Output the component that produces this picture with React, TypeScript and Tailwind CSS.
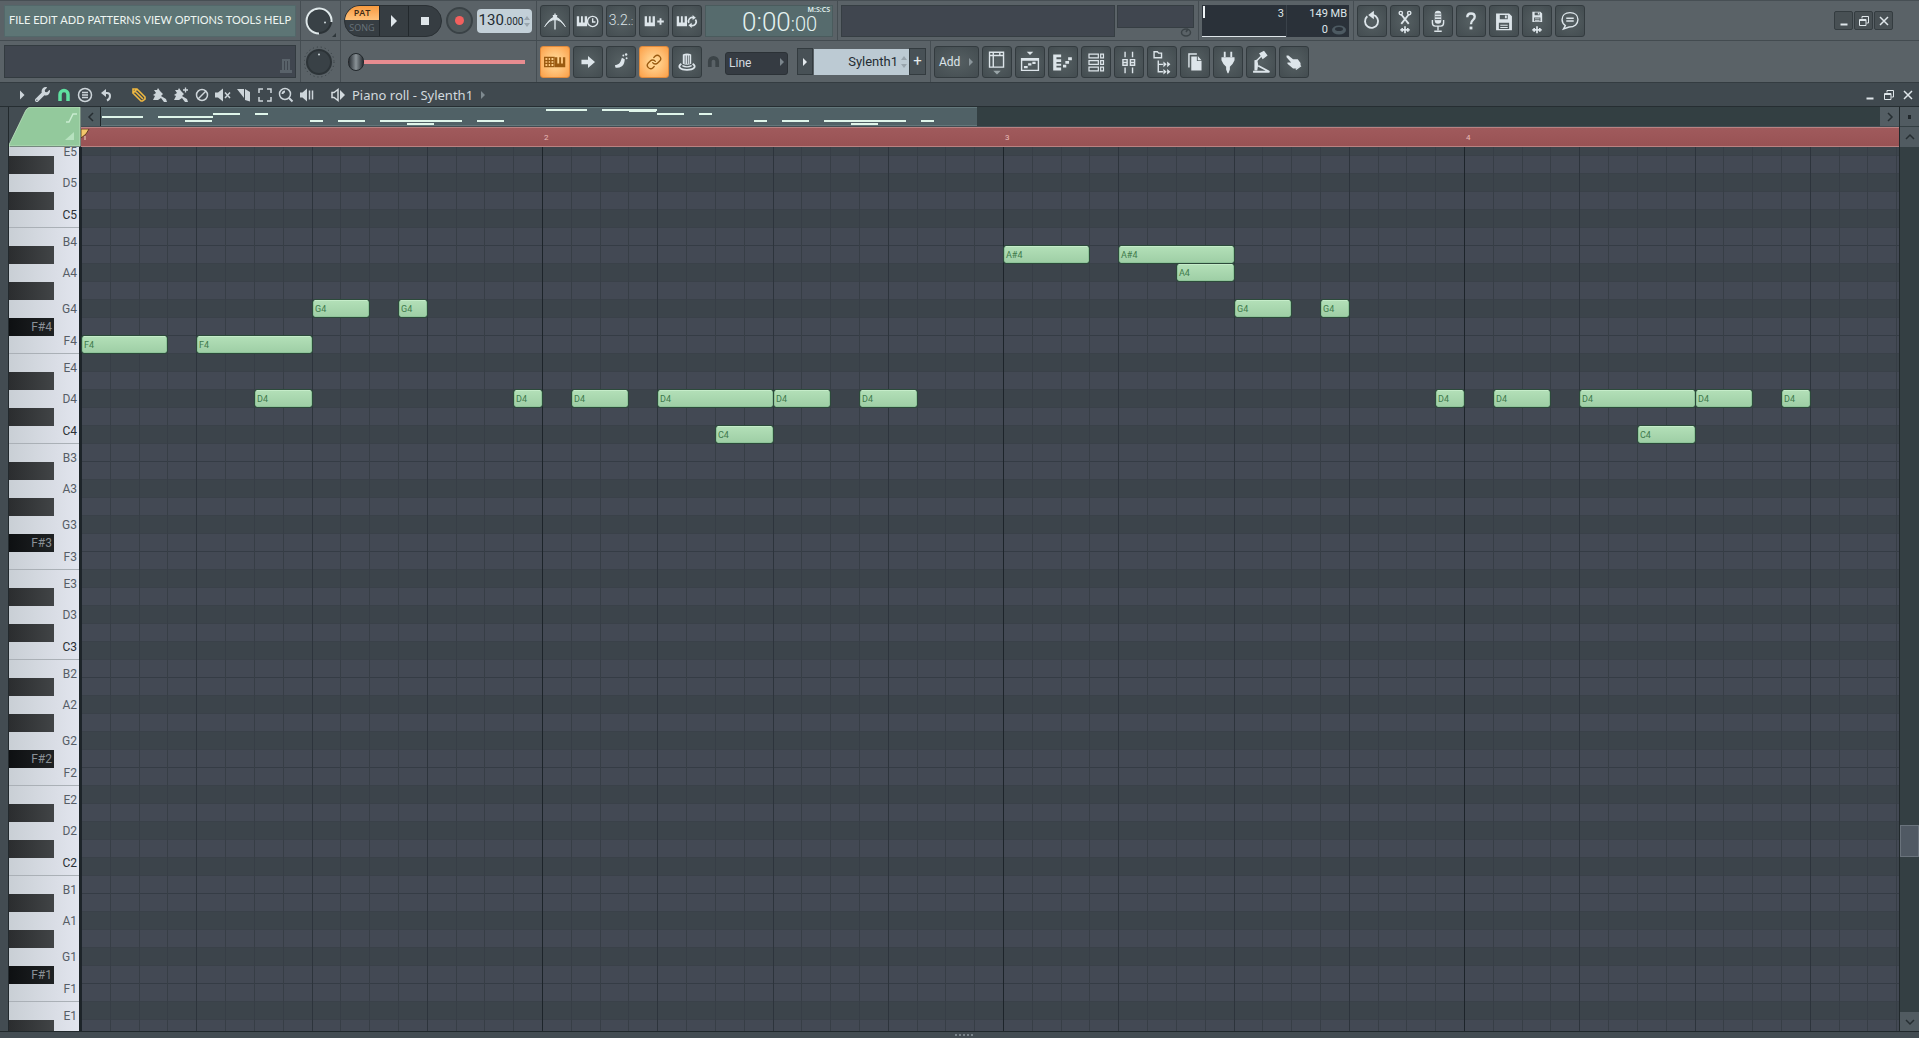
import type { ReactNode } from "react";
import { clsx } from "clsx";
import { Link } from "lucide-react";
import { FaWrench } from "react-icons/fa";

const ROW_HEIGHT = 18;
const BAR_WIDTH = 461;
const OVERVIEW_BAR_WIDTH = 222;

const MENU = ["FILE", "EDIT", "ADD", "PATTERNS", "VIEW", "OPTIONS", "TOOLS", "HELP"];

const NAMES = ["C", "C#", "D", "D#", "E", "F", "F#", "G", "G#", "A", "A#", "B"];
const TOP_PITCH = 76; // E5
const BOTTOM_PITCH = 27; // D#1

// white keys share the octave unevenly, so the tall ones are D, G and A
const TALL_KEYS = ["D", "G", "A"];
const DARK_ROWS = ["C", "D", "E", "G", "A"];

const PITCHES = Array.from(
  { length: TOP_PITCH - BOTTOM_PITCH + 1 },
  (_, i) => TOP_PITCH - i,
);

const nameOf = (pitch: number) => NAMES[pitch % 12];
const octaveOf = (pitch: number) => Math.floor(pitch / 12) - 1;
const labelOf = (pitch: number) => `${nameOf(pitch)}${octaveOf(pitch)}`;
const stepX = (step: number) => Math.round((step * BAR_WIDTH) / 16);
const overviewX = (step: number) => Math.round((step * OVERVIEW_BAR_WIDTH) / 16);

// [pitch, start, length], in sixteenths
const NOTES: [number, number, number][] = [
  [65, 0, 3],
  [65, 4, 4],
  [62, 6, 2],
  [67, 8, 2],
  [67, 11, 1],
  [62, 15, 1],
  [62, 17, 2],
  [62, 20, 4],
  [60, 22, 2],
  [62, 24, 2],
  [62, 27, 2],
  [70, 32, 3],
  [70, 36, 4],
  [69, 38, 2],
  [67, 40, 2],
  [67, 43, 1],
  [62, 47, 1],
  [62, 49, 2],
  [62, 52, 4],
  [60, 54, 2],
  [62, 56, 2],
  [62, 59, 1],
];

function Divider() {
  return <div className="ml-1 mr-[3px] w-px self-stretch bg-[#454d52]" />;
}

function Glyph({ children }: { children: ReactNode }) {
  return (
    <svg
      viewBox="0 0 30 32"
      className="h-8 w-[30px]"
      fill="none"
      stroke="currentColor"
      strokeWidth="1.5"
    >
      {children}
    </svg>
  );
}

function ToolButton({
  label,
  active,
  children,
}: {
  label: string;
  active?: boolean;
  children: ReactNode;
}) {
  return (
    <button
      type="button"
      aria-label={label}
      className={clsx(
        "flex h-8 w-[30px] shrink-0 items-center justify-center rounded-[3px] border",
        active
          ? "border-[#e08a3c] bg-radial from-[#ffe0a0] to-[#fb9f45] text-[#9a5a10]"
          : "border-[#333b3f] bg-radial from-[#566063] to-[#434c50] text-[#dde5ea]",
      )}
    >
      {children}
    </button>
  );
}

function Piano({ x }: { x: number }) {
  return (
    <path
      transform={`translate(${x} 11)`}
      d="M0 0H2.5V6.5H4.5V0H6.5V6.5H8.5V0H11V10.5H0Z"
      fill="currentColor"
      stroke="none"
    />
  );
}

function Wave() {
  return (
    <path d="M10 25.5H20M12 23.5V27.5M15 21.5V29M18 23.5V27.5" strokeWidth="1.8" />
  );
}

function Floppy() {
  return (
    <path
      d="M0 0H14L17 3V18H0ZM4 1.500V6H12.500V1.500ZM3 10V16.500H14V10ZM9.500 2H11.500V5H9.500Z M4.500 12H12.500V13H4.500ZM4.500 14.500H12.500V15.500H4.500Z"
      fill="currentColor"
      fillRule="evenodd"
      stroke="none"
    />
  );
}

function Knob({ lit }: { lit?: boolean }) {
  return (
    <svg viewBox="0 0 32 34" className="h-[34px] w-8 shrink-0" fill="none">
      {!lit && (
        <circle cx="15" cy="17" r="15" stroke="#353d41" strokeDasharray="1 3" />
      )}
      <circle cx="15" cy="17" r="12" fill="#394146" stroke="#2c3337" strokeWidth="2" />
      {lit ? (
        <>
          <path
            d="M15 29.500A12.500 12.500 0 1 1 27.500 18"
            stroke="#dfe8ea"
            strokeWidth="2"
          />
          <circle cx="21" cy="18.500" r="1" fill="#cfd8dc" />
          <path d="M28 33H32V29Z" fill="#2f373b" />
        </>
      ) : (
        <circle cx="15" cy="9.500" r="1" fill="#cfd8dc" />
      )}
    </svg>
  );
}

function WindowGlyph({ kind }: { kind: "min" | "restore" | "close" }) {
  return (
    <svg viewBox="0 0 10 10" className="size-[10px]" fill="none" stroke="#dfe6ea">
      {kind === "min" && <path d="M1.500 8.500H8.500" strokeWidth="2" />}
      {kind === "restore" && (
        <path d="M3 2.500V.5H9.500V7H7.500M.5 3.500H7V9.500H.5ZM.5 4.500H7" />
      )}
      {kind === "close" && <path d="M1 1L9 9M9 1L1 9" strokeWidth="1.5" />}
    </svg>
  );
}

function Transport() {
  return (
    <div className="flex h-8 w-[98px] shrink-0 overflow-hidden rounded-2xl border border-[#2a3034] bg-[#363d42]">
      <button
        type="button"
        className="flex w-[34px] flex-col items-stretch text-center font-['Open_Sans'] text-[9px] font-semibold leading-[14px]"
      >
        <span className="bg-linear-to-b from-[#f79a3e] to-[#ffc27a] text-[#3b2a16]">
          PAT
        </span>
        <span className="font-normal leading-4 text-[#69737a]">SONG</span>
      </button>
      <button
        type="button"
        aria-label="Play"
        className="flex w-[30px] items-center justify-center border-x border-[#22282c]"
      >
        <svg viewBox="0 0 8 12" className="h-3 w-2 fill-[#dfe6ea]">
          <path d="M1 0L7 6L1 12Z" />
        </svg>
      </button>
      <button type="button" aria-label="Stop" className="flex flex-1 items-center justify-center">
        <span className="size-2 bg-[#dfe6ea]" />
      </button>
    </div>
  );
}

function MainBar() {
  return (
    <div className="flex h-[41px] items-center border-b border-[#434b50] border-t border-t-[#474f54] pl-1">
      <nav className="flex h-8 w-[292px] shrink-0 items-center justify-between border border-[#53686a] bg-[#5d7575] px-1 font-['Lato'] text-[11px] text-[#eef5f2]">
        {MENU.map((item) => (
          <a key={item} href="#">
            {item}
          </a>
        ))}
      </nav>
      <Divider />
      <Knob lit />
      <Divider />
      <Transport />
      <button
        type="button"
        aria-label="Record"
        className="ml-1 flex size-[27px] shrink-0 items-center justify-center rounded-full border-2 border-[#3a4246] bg-[#4f585b]"
      >
        <span className="size-[9px] rounded-full bg-[#f2605e]" />
      </button>
      <button
        type="button"
        aria-label="Tempo"
        className="ml-1 flex h-6 w-[55px] shrink-0 items-center justify-center gap-px rounded-[4px] bg-[#c3d0d8] text-[15px] leading-6 text-[#222b31]"
      >
        <span>
          130<span className="text-[10px]">.000</span>
        </span>
        <svg viewBox="0 0 6 12" className="h-3 w-[6px] fill-[#9aa6ae]">
          <path d="M0 5L3 1L6 5ZM0 8H6L3 12Z" />
        </svg>
      </button>
      <Divider />
      <div className="flex shrink-0 gap-[3px]">
        <ToolButton label="Metronome">
          <Glyph>
            <path d="M4 22Q9 14.500 15 14.500Q21 14.500 26 22Q20 12 15 12Q10 12 4 22Z" fill="currentColor" strokeWidth="1" />
            <path d="M15 8V25" />
            <path d="M12.500 9.500H17.500L16.500 14H13.500Z" fill="currentColor" stroke="none" />
          </Glyph>
        </ToolButton>
        <ToolButton label="Wait for input">
          <Glyph>
            <Piano x={3} />
            <circle cx="20" cy="16.500" r="5.500" fill="#4a5357" />
            <path d="M20 13V17H23" />
          </Glyph>
        </ToolButton>
        <ToolButton label="Countdown before recording">
          <span className="text-[14px] font-light">
            3.2.<span className="text-[10px]">:</span>
          </span>
        </ToolButton>
        <ToolButton label="Blend recording">
          <Glyph>
            <Piano x={5} />
            <path d="M18.500 16.500H25.500M22 13V20" strokeWidth="2" />
          </Glyph>
        </ToolButton>
        <ToolButton label="Loop recording">
          <Glyph>
            <Piano x={4} />
            <path d="M17 18A4 4 0 0 1 22 12.500M24 14.500A4 4 0 0 1 19 20.500" strokeWidth="1.8" />
            <path d="M21 9.500L24.500 12.500L21 15ZM20 18L16.500 20.500L20 23.500Z" fill="currentColor" stroke="none" />
          </Glyph>
        </ToolButton>
      </div>
      <div className="relative ml-[3px] flex h-8 w-32 shrink-0 items-baseline border border-[#4a5b5d] bg-[#566b6d] pl-9 text-[#e4f2f0]">
        <span className="text-[26px] font-light leading-8">0:00</span>
        <span className="text-[20px] font-light leading-5">:00</span>
        <span className="absolute right-[2px] top-0 font-['Noto_Sans'] text-[7px] font-semibold leading-2">
          M:S:CS
        </span>
      </div>
      <Divider />
      <div className="h-8 w-[274px] shrink-0 border border-[#363e43] bg-[#40464f]" />
      <div className="ml-[2px] flex h-8 w-[77px] shrink-0 flex-col items-end">
        <div className="h-[23px] w-full shrink-0 border border-[#363e43] bg-[#40464f]" />
        <svg viewBox="0 0 12 9" className="mr-[2px] h-[9px] w-3" fill="none" stroke="#3b4347" strokeWidth="1.5">
          <ellipse cx="6" cy="4.500" rx="4.500" ry="3.500" />
          <path d="M6 4L8 1" />
        </svg>
      </div>
      <Divider />
      <div className="flex h-8 w-[147px] shrink-0 bg-[#2a3139] text-[11px] leading-4 text-[#dfe6ea]">
        <div className="flex w-[84px] justify-between border-b border-[#dfe6ea] pr-[2px] pt-px">
          <span className="ml-px h-3 w-[2px] bg-[#eef3f5]" />
          <span>3</span>
        </div>
        <div className="flex flex-1 flex-col items-end border-l border-[#3a424a] pr-[2px] pt-px">
          <span>149 MB</span>
          <span className="flex items-center gap-[3px]">
            0
            <svg viewBox="0 0 16 10" className="h-[10px] w-4">
              <ellipse cx="8" cy="5" rx="7" ry="4.500" fill="#4d5a62" />
              <ellipse cx="8" cy="4" rx="4" ry="2" fill="#2a3139" />
            </svg>
          </span>
        </div>
      </div>
      <Divider />
      <div className="flex shrink-0 gap-[3px]">
        <ToolButton label="Undo">
          <Glyph>
            <path d="M10 11A7 7 0 1 0 16 9.500" strokeWidth="2" />
            <path d="M17 5V14L11 9.500Z" fill="currentColor" stroke="none" />
          </Glyph>
        </ToolButton>
        <ToolButton label="Cut selection">
          <Glyph>
            <path d="M11 9L19 19M19 9L11 19" strokeWidth="2" />
            <circle cx="10.500" cy="7.500" r="1.800" />
            <circle cx="19.500" cy="7.500" r="1.800" />
            <Wave />
          </Glyph>
        </ToolButton>
        <ToolButton label="Record audio">
          <Glyph>
            <rect x="11.500" y="5" width="7" height="14" rx="3.500" fill="currentColor" stroke="none" />
            <path d="M12 8.500H18M12 11.500H18M12 14.500H18" stroke="#4a5357" strokeWidth="1" />
            <path d="M9 15V18Q9 21.500 12 21.500H18Q21 21.500 21 18V15M15 22V26M11 27H19" />
          </Glyph>
        </ToolButton>
        <ToolButton label="Help">
          <Glyph>
            <path d="M11 12Q11 8 15 8Q19 8 19 11.500Q19 13.500 17 15Q15 16.500 15 19.500" strokeWidth="2.500" />
            <rect x="13.500" y="22" width="3" height="3" fill="currentColor" stroke="none" />
          </Glyph>
        </ToolButton>
        <ToolButton label="Save">
          <Glyph>
            <g transform="translate(6.500 8)">
              <Floppy />
            </g>
          </Glyph>
        </ToolButton>
        <ToolButton label="Render">
          <Glyph>
            <g transform="translate(10 6) scale(.62)">
              <Floppy />
            </g>
            <Wave />
          </Glyph>
        </ToolButton>
        <ToolButton label="Messages">
          <Glyph>
            <path d="M15 7C10 7 6.500 10 6.500 14.500C6.500 17.500 8 19.500 10 21L8 24.500L14 22.500C20 22.500 23.500 19 23.500 14.500C23.500 10 20 7 15 7Z" />
            <path d="M11 13H19M11 16H19" />
          </Glyph>
        </ToolButton>
      </div>
      <div className="ml-auto mr-[26px] flex gap-px">
        {(["min", "restore", "close"] as const).map((kind) => (
          <button
            key={kind}
            type="button"
            aria-label={kind}
            className="flex size-[19px] items-center justify-center rounded-[2px] border border-[#343c40] bg-[#485054]"
          >
            <WindowGlyph kind={kind} />
          </button>
        ))}
      </div>
    </div>
  );
}

function ShortcutBar() {
  return (
    <div className="flex h-[42px] items-center border-b border-[#343c41] pl-1">
      <div className="flex h-[33px] w-[292px] shrink-0 items-end justify-end border border-[#333b40] bg-[#40464f] p-[3px]">
        <svg viewBox="0 0 12 16" className="h-4 w-3">
          <path d="M2 1H10V12H12V15H0V12H2Z" fill="#59626a" />
          <path d="M4.500 3V12M7.500 3V12" stroke="#40464f" />
        </svg>
      </div>
      <Divider />
      <Knob />
      <Divider />
      <div className="flex h-[33px] w-[188px] shrink-0 items-center">
        <input
          type="range"
          aria-label="Master pitch"
          min={0}
          max={100}
          defaultValue={0}
          className="ml-1 h-[4px] w-[177px] appearance-none bg-[#e78c90] [&::-webkit-slider-thumb]:h-[18px] [&::-webkit-slider-thumb]:w-4 [&::-webkit-slider-thumb]:appearance-none [&::-webkit-slider-thumb]:rounded-full [&::-webkit-slider-thumb]:border [&::-webkit-slider-thumb]:border-[#22282c] [&::-webkit-slider-thumb]:bg-linear-to-r [&::-webkit-slider-thumb]:from-[#2b3136] [&::-webkit-slider-thumb]:via-[#8b9398] [&::-webkit-slider-thumb]:to-[#2b3136]"
        />
      </div>
      <Divider />
      <div className="flex shrink-0 gap-[3px]">
        <ToolButton label="Typing keyboard" active>
          <Glyph>
            <path d="M4 11H14V21H4ZM4 14.500H14M4 17.500H14M7.500 11V21M10.500 11V21" />
            <Piano x={15} />
          </Glyph>
        </ToolButton>
        <ToolButton label="Step editing">
          <Glyph>
            <path d="M8 13.500H15V9.500L22.500 16L15 22.500V18.500H8Z" fill="currentColor" stroke="none" />
          </Glyph>
        </ToolButton>
        <ToolButton label="Slide">
          <Glyph>
            <path d="M8.500 19.500Q13 19 14.500 15.500L16 11.500L19 13Q19 18 16 20.500Q12 23 9 22Z" fill="currentColor" stroke="none" />
            <circle cx="17.500" cy="9" r="1" fill="currentColor" stroke="none" />
            <circle cx="20.500" cy="8" r="1.300" fill="currentColor" stroke="none" />
            <circle cx="21" cy="12" r="1" fill="currentColor" stroke="none" />
          </Glyph>
        </ToolButton>
        <ToolButton label="Multilink" active>
          <Link size={16} strokeWidth={2} />
        </ToolButton>
        <ToolButton label="Plugin picker">
          <Glyph>
            <path d="M10.500 8Q15 6 19.500 8V18Q15 20 10.500 18Z" fill="currentColor" stroke="none" />
            <path d="M13 9V18M15.500 9V18M17.500 9V18" stroke="#4a5357" strokeWidth=".8" />
            <path d="M9 18C4 21 8 24.500 15 24.500C22 24.500 26 21 21 18" strokeWidth="2" />
            <path d="M10 20Q15 22.500 20 20" />
          </Glyph>
        </ToolButton>
      </div>
      <svg viewBox="0 0 14 14" className="mx-[5px] size-[13px] shrink-0" fill="none" stroke="#3c4448" strokeWidth="4">
        <path d="M3 13V7A4 4 0 0 1 11 7V13" />
      </svg>
      <div className="relative h-[23px] w-[63px] shrink-0">
        <select
          aria-label="Snap"
          className="h-full w-full appearance-none rounded-[3px] border border-[#2b3136] bg-[#353b42] pl-[3px] text-xs text-[#d5dce0]"
        >
          <option>Line</option>
        </select>
        <svg viewBox="0 0 4 8" className="absolute right-1 top-2 h-2 w-1 fill-[#7b858c]">
          <path d="M0 0L4 4L0 8Z" />
        </svg>
      </div>
      <button
        type="button"
        aria-label="Pattern menu"
        className="ml-[9px] flex h-[27px] w-4 shrink-0 items-center justify-center border border-[#333b3f] bg-[#485156]"
      >
        <svg viewBox="0 0 4 8" className="h-2 w-1 fill-[#e5ebee]">
          <path d="M0 0L4 4L0 8Z" />
        </svg>
      </button>
      <button
        type="button"
        className="ml-px flex h-[26px] w-[95px] shrink-0 items-center justify-end gap-[3px] bg-[#bccad3] pr-[2px] text-[13px] text-[#232c32]"
      >
        Sylenth1
        <svg viewBox="0 0 6 12" className="h-3 w-[6px] fill-[#98a4ac]">
          <path d="M0 4L3 0L6 4ZM0 8H6L3 12Z" />
        </svg>
      </button>
      <button
        type="button"
        className="flex h-[27px] w-[17px] shrink-0 items-center justify-center border border-[#333b3f] bg-[#485156] text-[15px] text-[#e5ebee]"
      >
        +
      </button>
      <Divider />
      <button
        type="button"
        className="mr-[3px] flex h-8 w-[45px] shrink-0 items-center justify-between rounded-[3px] border border-[#333b3f] bg-radial from-[#566063] to-[#434c50] pl-1 pr-[5px] text-xs text-[#dde5ea]"
      >
        Add
        <svg viewBox="0 0 4 8" className="h-2 w-1 fill-[#8b969b]">
          <path d="M0 0L4 4L0 8Z" />
        </svg>
      </button>
      <div className="flex shrink-0 gap-[3px]">
        <ToolButton label="Playlist">
          <Glyph>
            <path d="M7 5.500H22V21.500H7ZM7 9H22M11 5.500V21.500M18 5.500V9" />
            <path d="M11 25.500H19L15 29.500Z" fill="#9aa5a8" stroke="none" />
          </Glyph>
        </ToolButton>
        <ToolButton label="Open playlist">
          <Glyph>
            <path d="M11.500 5H18.500L15 8.500Z" fill="currentColor" stroke="none" />
            <path d="M6 12.500H24V25H6Z" />
            <path d="M6 13.500H24M8.500 21.500H12.500M13 18.500H16.500M17.500 17H21" strokeWidth="2.500" />
          </Glyph>
        </ToolButton>
        <ToolButton label="Piano roll">
          <Glyph>
            <path d="M4.500 8H13V11H8V13H13V16H8V18H13V20H8V22H13V25H4.500Z" fill="currentColor" stroke="none" />
            <path d="M15 20.500H18.500M17.500 16.500H21.500M20.500 12.500H24.500" strokeWidth="3" />
          </Glyph>
        </ToolButton>
        <ToolButton label="Channel rack">
          <Glyph>
            <path d="M7.500 7.500H17.500V11.500H7.500ZM20 7.500H23V11.500H20ZM7.500 14.500H17.500V18.500H7.500ZM20 14.500H23V18.500H20ZM7.500 21.500H17.500V25.500H7.500ZM20 21.500H23V25.500H20Z" strokeWidth="1.3" />
          </Glyph>
        </ToolButton>
        <ToolButton label="Mixer">
          <Glyph>
            <path d="M8.500 13.500H13V19.500H8.500ZM16.500 13.500H21V19.500H16.500ZM10.800 5V11M18.800 5V11M10.800 22V28M18.800 22V28" />
            <path d="M8.500 16.500H13M16.500 16.500H21" />
          </Glyph>
        </ToolButton>
        <ToolButton label="Browser">
          <Glyph>
            <path d="M6.500 5H10L11.500 6.500H14.500V11.500H6.500Z" />
            <path d="M11 14.500V26.500H16M11 18.500H16" />
            <path d="M16.500 15.500L20 18.500L16.500 21.500ZM16.500 23.500L20 26.500L16.500 29.500ZM20.500 15.500L24 18.500L20.500 21.500ZM20.500 23.500L24 26.500L20.500 29.500Z" fill="currentColor" stroke="none" />
          </Glyph>
        </ToolButton>
        <ToolButton label="Project info">
          <Glyph>
            <path d="M8.500 22V7.500H17" />
            <path d="M11 10H17V15H22V25H11ZM18 9.500L22 14H18Z" fill="currentColor" stroke="none" />
          </Glyph>
        </ToolButton>
        <ToolButton label="Plugins">
          <Glyph>
            <path d="M8 11H22V14Q20 19 17 21V24L15.500 28H14.500L13 24V21Q10 19 8 14Z" fill="currentColor" stroke="none" />
            <path d="M11.500 5V11M18.500 5V11" strokeWidth="2" />
          </Glyph>
        </ToolButton>
        <ToolButton label="Touch controller">
          <Glyph>
            <path d="M14 7L18 5L21 9L17 12Z" fill="currentColor" />
            <path d="M16 9L10 15" />
            <path d="M8 14L11 13.500L12 19L11 25H8Z" fill="currentColor" stroke="none" />
            <path d="M6.500 26.500H24L12 20" strokeWidth="2" />
          </Glyph>
        </ToolButton>
        <ToolButton label="Pointer">
          <Glyph>
            <path d="M7 9L9 9L14 13L19 13L22 17V20L18 23H14L8 18V16.500H12L7 11Z" fill="currentColor" stroke="none" />
            <path d="M17 24L22.500 20" />
          </Glyph>
        </ToolButton>
      </div>
    </div>
  );
}

function SmallGlyph({ children }: { children: ReactNode }) {
  return (
    <svg viewBox="0 0 16 16" className="size-4" fill="none" stroke="currentColor" strokeWidth="1.5">
      {children}
    </svg>
  );
}

const TITLE_TOOLS = [
  {
    label: "Options",
    icon: <path d="M6 3.500L10.500 8L6 12.500Z" fill="currentColor" stroke="none" />,
  },
  { label: "Tools", icon: <FaWrench size={15} className="-scale-x-100 rotate-90" /> },
  {
    label: "Snap to grid",
    tone: "text-[#5fe0a0]",
    icon: <path d="M4 14V7.500A4 4 0 0 1 12 7.500V14" strokeWidth="3.500" />,
  },
  {
    label: "Stamp",
    icon: (
      <>
        <circle cx="8" cy="8" r="6.500" />
        <path d="M5 5.500H11M5 8H11M5 10.500H11" />
      </>
    ),
  },
  {
    label: "Undo",
    icon: (
      <>
        <path d="M6 6H9Q12 6 12 9Q12 12 9 13.500" strokeWidth="2" />
        <path d="M3 6L8 2V10Z" fill="currentColor" stroke="none" />
      </>
    ),
  },
];

const EDIT_TOOLS = [
  {
    label: "Draw",
    tone: "text-[#f0b840]",
    icon: (
      <path d="M2 6V2H6L14 10V12L11.500 14H10L2 6L5.500 2.500M4 4L12 12M2 6L6 2" strokeWidth="1.6" />
    ),
  },
  {
    label: "Paint",
    icon: (
      <path d="M2 3H5L6 1L8 4L11 7L9 9L14 12L15 15H12L9 11L6 13H1L3 9L1 8L4 6Z" fill="currentColor" stroke="none" />
    ),
  },
  {
    label: "Paint sequence",
    icon: (
      <>
        <path d="M2 3H5L6 1L8 4L11 7L9 9L14 12L15 15H12L9 11L6 13H1L3 9L1 8L4 6Z" fill="currentColor" stroke="none" />
        <path d="M10 3H15M12.500 .5V5.500" strokeWidth="1.3" />
      </>
    ),
  },
  {
    label: "Delete",
    icon: (
      <>
        <circle cx="8" cy="8" r="5.500" />
        <path d="M12 4L4 12" />
      </>
    ),
  },
  {
    label: "Mute",
    icon: (
      <>
        <path d="M0 5.500H3L8 1.500V14.500L3 10.500H0Z" fill="currentColor" stroke="none" />
        <path d="M10 5.500L15 11M15 5.500L10 11" />
      </>
    ),
  },
  {
    label: "Slice",
    icon: (
      <>
        <path d="M1 2H8V11Z" fill="currentColor" stroke="none" />
        <path d="M9 2L14 5V14.500L9 13Z" fill="currentColor" stroke="none" />
      </>
    ),
  },
  {
    label: "Select",
    icon: <path d="M2 6V2H6M10 2H14V6M14 10V14H10M6 14H2V10" />,
  },
  {
    label: "Zoom",
    icon: (
      <>
        <circle cx="7" cy="7" r="5.500" />
        <path d="M4.500 7A2.500 2.500 0 0 1 7 4.500M11 11L14.500 14.500" strokeWidth="2" />
      </>
    ),
  },
  {
    label: "Playback",
    icon: (
      <>
        <path d="M1 5.500H3.500L8 1.500V14.500L3.500 10.500H1Z" fill="currentColor" stroke="none" />
        <path d="M10.500 3.500V12.500M13.500 3.500V12.500" />
      </>
    ),
  },
];

function TitleTool({ label, tone, icon }: { label: string; tone?: string; icon: ReactNode }) {
  return (
    <button
      type="button"
      aria-label={label}
      className={clsx("flex h-5 w-[21px] items-center justify-center", tone ?? "text-[#cdd5da]")}
    >
      {label === "Tools" ? icon : <SmallGlyph>{icon}</SmallGlyph>}
    </button>
  );
}

function TitleBar() {
  return (
    <div className="flex h-[23px] shrink-0 items-center bg-[#40494f] pl-[11px] pr-[2px]">
      {TITLE_TOOLS.map((tool) => (
        <TitleTool key={tool.label} {...tool} />
      ))}
      <div className="ml-3 flex">
        {EDIT_TOOLS.map((tool) => (
          <TitleTool key={tool.label} {...tool} />
        ))}
      </div>
      <button
        type="button"
        className="ml-[10px] flex items-center font-['Noto_Sans'] text-[13px] leading-5 text-[#d3dade]"
      >
        <span className="mr-1 flex w-[21px] justify-center">
          <SmallGlyph>
            <path d="M2 5.500H4L8 2.500V13.500L4 10.500H2Z" />
            <path d="M10 3L15 8L10 13Z" fill="currentColor" stroke="none" />
          </SmallGlyph>
        </span>
        Piano roll - Sylenth1
        <svg viewBox="0 0 4 8" className="ml-2 h-2 w-1 fill-[#7f8a90]">
          <path d="M0 0L4 4L0 8Z" />
        </svg>
      </button>
      <div className="ml-auto flex">
        {(["min", "restore", "close"] as const).map((kind) => (
          <button
            key={kind}
            type="button"
            aria-label={`Piano roll ${kind}`}
            className="flex h-5 w-[19px] items-center justify-center"
          >
            <WindowGlyph kind={kind} />
          </button>
        ))}
      </div>
    </div>
  );
}

function Chevron({ d }: { d: string }) {
  return (
    <svg viewBox="0 0 10 10" className="size-[10px]" fill="none" stroke="#262e32" strokeWidth="1.5">
      <path d={d} />
    </svg>
  );
}

function Overview() {
  return (
    <div className="flex h-[19px] shrink-0 bg-[#333f42]">
      <button
        type="button"
        aria-label="Scroll left"
        className="flex w-5 shrink-0 items-center justify-center border-r border-[#20282b] bg-[#4f5c61]"
      >
        <Chevron d="M7 1L3 5L7 9" />
      </button>
      {/* visible range of the pattern */}
      <div className="relative w-[876px] shrink-0 border-y border-[#63777b] bg-[#506166]">
        {NOTES.map(([pitch, start, length]) => (
          <div
            key={`${pitch}-${start}`}
            className="absolute h-[2px] bg-[#dff5ea]"
            style={{
              left: overviewX(start) + 1,
              top: Math.round(8 + (65 - pitch) * 1.4),
              width: overviewX(length) - 1,
            }}
          />
        ))}
      </div>
      <button
        type="button"
        aria-label="Scroll right"
        className="ml-auto flex w-[19px] shrink-0 items-center justify-center bg-[#545e64]"
      >
        <Chevron d="M3 1L7 5L3 9" />
      </button>
    </div>
  );
}

function Ruler() {
  return (
    <div className="relative mt-px h-5 shrink-0 border-y border-[#b98282] bg-linear-to-b from-[#a05a5c] to-[#985254]">
      <svg viewBox="0 0 9 12" className="absolute left-0 top-px h-3 w-[9px]">
        <path d="M0 0H8L5 5L0 9Z" fill="#f2c66b" stroke="#4b3018" strokeWidth=".8" />
        <path d="M4 7V11" stroke="#f3d7c8" />
      </svg>
      {[2, 3, 4].map((bar) => (
        <span
          key={bar}
          className="absolute top-1 pl-[2px] text-[8px] leading-3 text-[#e9bcb8]"
          style={{ left: (bar - 1) * BAR_WIDTH }}
        >
          {bar}
        </span>
      ))}
    </div>
  );
}

function Keyboard() {
  return (
    <div className="flex-1 overflow-hidden border-r-2 border-[#1d2428] bg-linear-to-r from-[#c9cfd5] to-[#e2e5ee]">
      <div className="relative -mt-[9px] text-xs">
        {PITCHES.filter((pitch) => !nameOf(pitch).includes("#")).map((pitch) => {
          const name = nameOf(pitch);
          return (
            <div
              key={pitch}
              className={clsx(
                "flex items-center justify-end pr-[2px]",
                TALL_KEYS.includes(name) ? "h-9" : "h-[27px]",
                (name === "F" || name === "C") && "border-b border-[#aab0b6] pt-[2px]",
                name === "C" ? "text-[#2a3036]" : "text-[#565d66]",
              )}
            >
              {labelOf(pitch)}
            </div>
          );
        })}
        {PITCHES.map(
          (pitch, row) =>
            nameOf(pitch).includes("#") && (
              <div
                key={pitch}
                className={clsx(
                  "absolute left-0 flex h-[18px] w-[45px] items-center justify-end pr-[2px]",
                  nameOf(pitch) === "F#"
                    ? "bg-linear-to-r from-[#0e1012] to-[#1f2224] text-[#8a9096]"
                    : "bg-linear-to-r from-[#2b2d2f] to-[#414446]",
                )}
                style={{ top: row * ROW_HEIGHT }}
              >
                {nameOf(pitch) === "F#" && labelOf(pitch)}
              </div>
            ),
        )}
      </div>
    </div>
  );
}

function NoteGrid() {
  return (
    <div className="relative min-h-0 flex-1 overflow-hidden bg-[#434954]">
      <div className="relative -mt-[9px]">
        {PITCHES.map((pitch) => (
          <div
            key={pitch}
            className={clsx(
              "h-[18px] border-b",
              DARK_ROWS.includes(nameOf(pitch)) ? "bg-[#3c444b]" : "bg-[#434954]",
              ["B", "F#"].includes(nameOf(pitch)) ? "border-[#353c45]" : "border-[#3a4149]",
            )}
          />
        ))}
        {Array.from({ length: 64 }, (_, step) => (
          <div
            key={step}
            className={clsx(
              "absolute inset-y-0 w-px",
              step % 16 === 0 ? "bg-[#1d242a]" : step % 4 === 0 ? "bg-[#2d343c]" : "bg-[#373e46]",
            )}
            style={{ left: stepX(step) }}
          />
        ))}
        {NOTES.map(([pitch, start, length]) => (
          <div
            key={`${pitch}-${start}`}
            className="absolute h-[17px] overflow-hidden rounded-[2px] border border-[#8fc49a] border-t-[#c5ecc9] bg-linear-to-b from-[#b2dfb7] to-[#9fcfa6] pl-px text-[9px] leading-4 text-[#3f7a4c] outline outline-[#2c4a3a]"
            style={{
              left: stepX(start) + 1,
              top: (TOP_PITCH - pitch) * ROW_HEIGHT,
              width: stepX(start + length) - stepX(start) - 1,
            }}
          >
            {labelOf(pitch)}
          </div>
        ))}
      </div>
    </div>
  );
}

function VerticalScroll() {
  return (
    <div className="flex w-5 shrink-0 flex-col border-l border-[#20282b] bg-[#343f43]">
      <button
        type="button"
        aria-label="Zoom"
        className="flex h-[19px] shrink-0 items-center justify-center bg-[#515b61]"
      >
        <span className="h-1 w-[3px] bg-[#20272b]" />
      </button>
      <button
        type="button"
        aria-label="Scroll up"
        className="mt-px flex h-5 shrink-0 items-center justify-center bg-[#515b61]"
      >
        <Chevron d="M1 7L5 3L9 7" />
      </button>
      <div className="flex-[678]" />
      <div className="h-8 shrink-0 border border-[#6a737c] bg-[#505963]" />
      <div className="flex-[155]" />
      <button
        type="button"
        aria-label="Scroll down"
        className="flex h-[19px] shrink-0 items-center justify-center bg-[#515b61]"
      >
        <Chevron d="M1 3L5 7L9 3" />
      </button>
    </div>
  );
}

export default function App() {
  return (
    <div className="flex h-screen flex-col overflow-hidden bg-[#434c52] font-['Roboto',sans-serif]">
      <header className="shrink-0 bg-[#5a6267]">
        <MainBar />
        <ShortcutBar />
      </header>
      <TitleBar />
      <main className="flex min-h-0 flex-1 border-t border-[#262e32] pl-2">
        <div className="flex w-[73px] shrink-0 flex-col border-l border-[#22292d]">
          {/* snap corner above the keys */}
          <svg viewBox="0 0 72 40" className="h-10 w-[72px] shrink-0">
            <path d="M0 40V38L16 5Q18 0 23 0H71V39H0Z" fill="#93c99c" stroke="#c0e6c2" strokeWidth=".8" />
            <path d="M57 15H60L64 7H68" fill="none" stroke="#c9ecd0" strokeWidth="1.5" />
            <path d="M56 33L65 25V33Z" fill="#b7e2bf" />
          </svg>
          <Keyboard />
        </div>
        <div className="flex min-w-0 flex-1 flex-col">
          <Overview />
          <Ruler />
          <NoteGrid />
        </div>
        <VerticalScroll />
      </main>
      <footer className="flex h-[7px] shrink-0 items-center justify-center gap-[2px] border-t border-[#20282b] pl-2">
        {Array.from({ length: 5 }, (_, i) => (
          <span key={i} className="size-[2px] bg-[#7a848a]" />
        ))}
      </footer>
    </div>
  );
}
